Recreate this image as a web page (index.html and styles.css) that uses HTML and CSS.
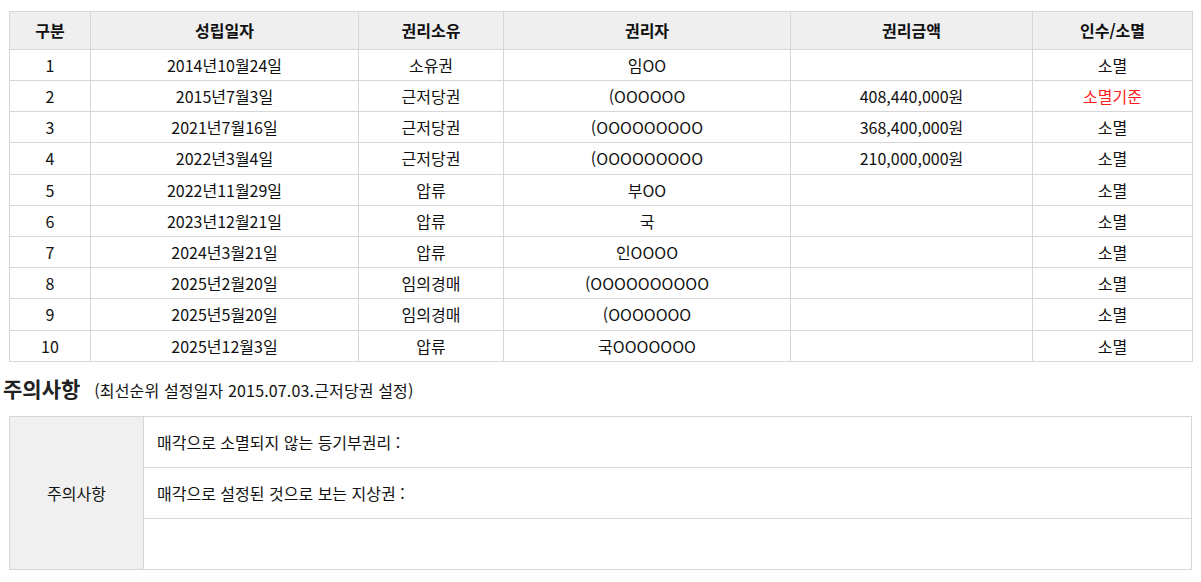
FILE: index.html
```html
<!DOCTYPE html>
<html lang="ko">
<head>
<meta charset="utf-8">
<link rel="stylesheet" href="styles.css">
</head>
<body>
<div class="page">
  <table class="rights">
    <colgroup>
      <col class="c1"><col class="c2"><col class="c3"><col class="c4"><col class="c5"><col class="c6">
    </colgroup>
    <thead>
      <tr><th>구분</th><th>성립일자</th><th>권리소유</th><th>권리자</th><th>권리금액</th><th>인수/소멸</th></tr>
    </thead>
    <tbody>
      <tr><td>1</td><td>2014년10월24일</td><td>소유권</td><td>임OO</td><td></td><td>소멸</td></tr>
      <tr><td>2</td><td>2015년7월3일</td><td>근저당권</td><td>(OOOOOO</td><td>408,440,000원</td><td class="red">소멸기준</td></tr>
      <tr><td>3</td><td>2021년7월16일</td><td>근저당권</td><td>(OOOOOOOOO</td><td>368,400,000원</td><td>소멸</td></tr>
      <tr><td>4</td><td>2022년3월4일</td><td>근저당권</td><td>(OOOOOOOOO</td><td>210,000,000원</td><td>소멸</td></tr>
      <tr><td>5</td><td>2022년11월29일</td><td>압류</td><td>부OO</td><td></td><td>소멸</td></tr>
      <tr><td>6</td><td>2023년12월21일</td><td>압류</td><td>국</td><td></td><td>소멸</td></tr>
      <tr><td>7</td><td>2024년3월21일</td><td>압류</td><td>인OOOO</td><td></td><td>소멸</td></tr>
      <tr><td>8</td><td>2025년2월20일</td><td>임의경매</td><td>(OOOOOOOOOO</td><td></td><td>소멸</td></tr>
      <tr><td>9</td><td>2025년5월20일</td><td>임의경매</td><td>(OOOOOOO</td><td></td><td>소멸</td></tr>
      <tr><td>10</td><td>2025년12월3일</td><td>압류</td><td>국OOOOOOO</td><td></td><td>소멸</td></tr>
    </tbody>
  </table>

  <h2 class="title">주의사항<span class="sub">(최선순위 설정일자 2015.07.03.근저당권 설정)</span></h2>

  <table class="notes">
    <colgroup><col class="n1"><col class="n2"></colgroup>
    <tbody>
      <tr><th rowspan="3">주의사항</th><td>매각으로 소멸되지 않는 등기부권리 :</td></tr>
      <tr><td>매각으로 설정된 것으로 보는 지상권 :</td></tr>
      <tr><td>&nbsp;</td></tr>
    </tbody>
  </table>
</div>
</body>
</html>
```

FILE: styles.css
```css
html, body {
  margin: 0;
  padding: 0;
  background: #fff;
}
body {
  font-family: "Noto Sans CJK KR", "Noto Sans", sans-serif;
  font-size: 16px;
  color: #111;
}
.page {
  padding: 11px 9px 0 9px;
}
table {
  border-collapse: collapse;
  table-layout: fixed;
  width: 1183px;
}
.rights th, .rights td {
  border: 1px solid #d6d6d6;
  text-align: center;
  font-size: 16px;
  line-height: 20.2px;
  white-space: nowrap;
}
.rights th {
  background: #efefef;
  font-weight: bold;
  padding: 8px 4px 8.5px;
}
.rights td {
  padding: 5px 4px;
}
.c1 { width: 81px; }
.c2 { width: 268px; }
.c3 { width: 145px; }
.c4 { width: 287px; }
.c5 { width: 242px; }
.c6 { width: 160px; }
.red { color: #ff1a1a; }

.title {
  margin: 11px 0 11px -6px;
  font-size: 21px;
  font-weight: bold;
  color: #222;
  line-height: 30px;
}
.sub {
  font-size: 16px;
  font-weight: normal;
  margin-left: 14px;
  letter-spacing: 0.15px;
  color: #111;
}
.notes th, .notes td {
  border: 1px solid #d6d6d6;
  font-size: 16px;
  line-height: 20.2px;
}
.notes th {
  background: #f0f0f0;
  font-weight: normal;
  text-align: center;
}
.notes td {
  padding: 15px 13px;
  text-align: left;
}
.n1 { width: 134px; }
.n2 { width: auto; }
```
